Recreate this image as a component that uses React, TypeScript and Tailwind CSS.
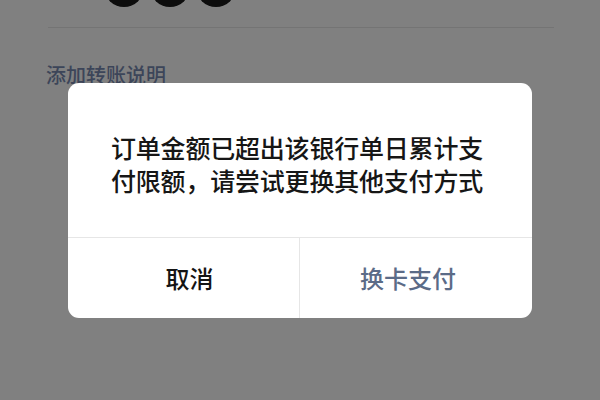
import React from "react";

export default function App() {
  const font = { fontFamily: '"Noto Sans CJK SC", "Noto Sans", sans-serif' };
  return (
    <div className="relative w-[600px] h-[400px] overflow-hidden bg-[#808080]" style={font}>
      <div className="flex gap-[6px] pl-[104px] -mt-[33px]">
        <div className="w-[40px] h-[40px] rounded-full bg-[#0d0d0d]" />
        <div className="w-[40px] h-[40px] rounded-full bg-[#0d0d0d]" />
        <div className="w-[40px] h-[40px] rounded-full bg-[#0d0d0d]" />
      </div>
      <div className="ml-[48px] mr-[46px] mt-[20px] h-px bg-[#747474]" />
      <div className="ml-[46px] mt-[34px] text-[20px] leading-[26px] font-medium text-[#3c4559]">添加转账说明</div>

      <div className="absolute left-[68px] top-[83px] w-[464px] h-[235px] rounded-[11px] bg-white flex flex-col overflow-hidden">
        <div className="h-[154px] pt-[48px] pr-[6px] text-center text-[25px] leading-[33px] font-medium text-[#161616] tracking-[-0.2px]">
          <div>订单金额已超出该银行单日累计支</div>
          <div>付限额，请尝试更换其他支付方式</div>
        </div>
        <div className="grid grid-cols-2 flex-1 border-t border-[#e6e6e6]">
          <div className="flex items-center justify-center pl-[12px] text-[24px] font-medium text-[#141414] border-r border-[#e6e6e6]">取消</div>
          <div className="flex items-center justify-center pr-[16px] text-[24px] font-medium text-[#5b6b87]">换卡支付</div>
        </div>
      </div>
    </div>
  );
}
